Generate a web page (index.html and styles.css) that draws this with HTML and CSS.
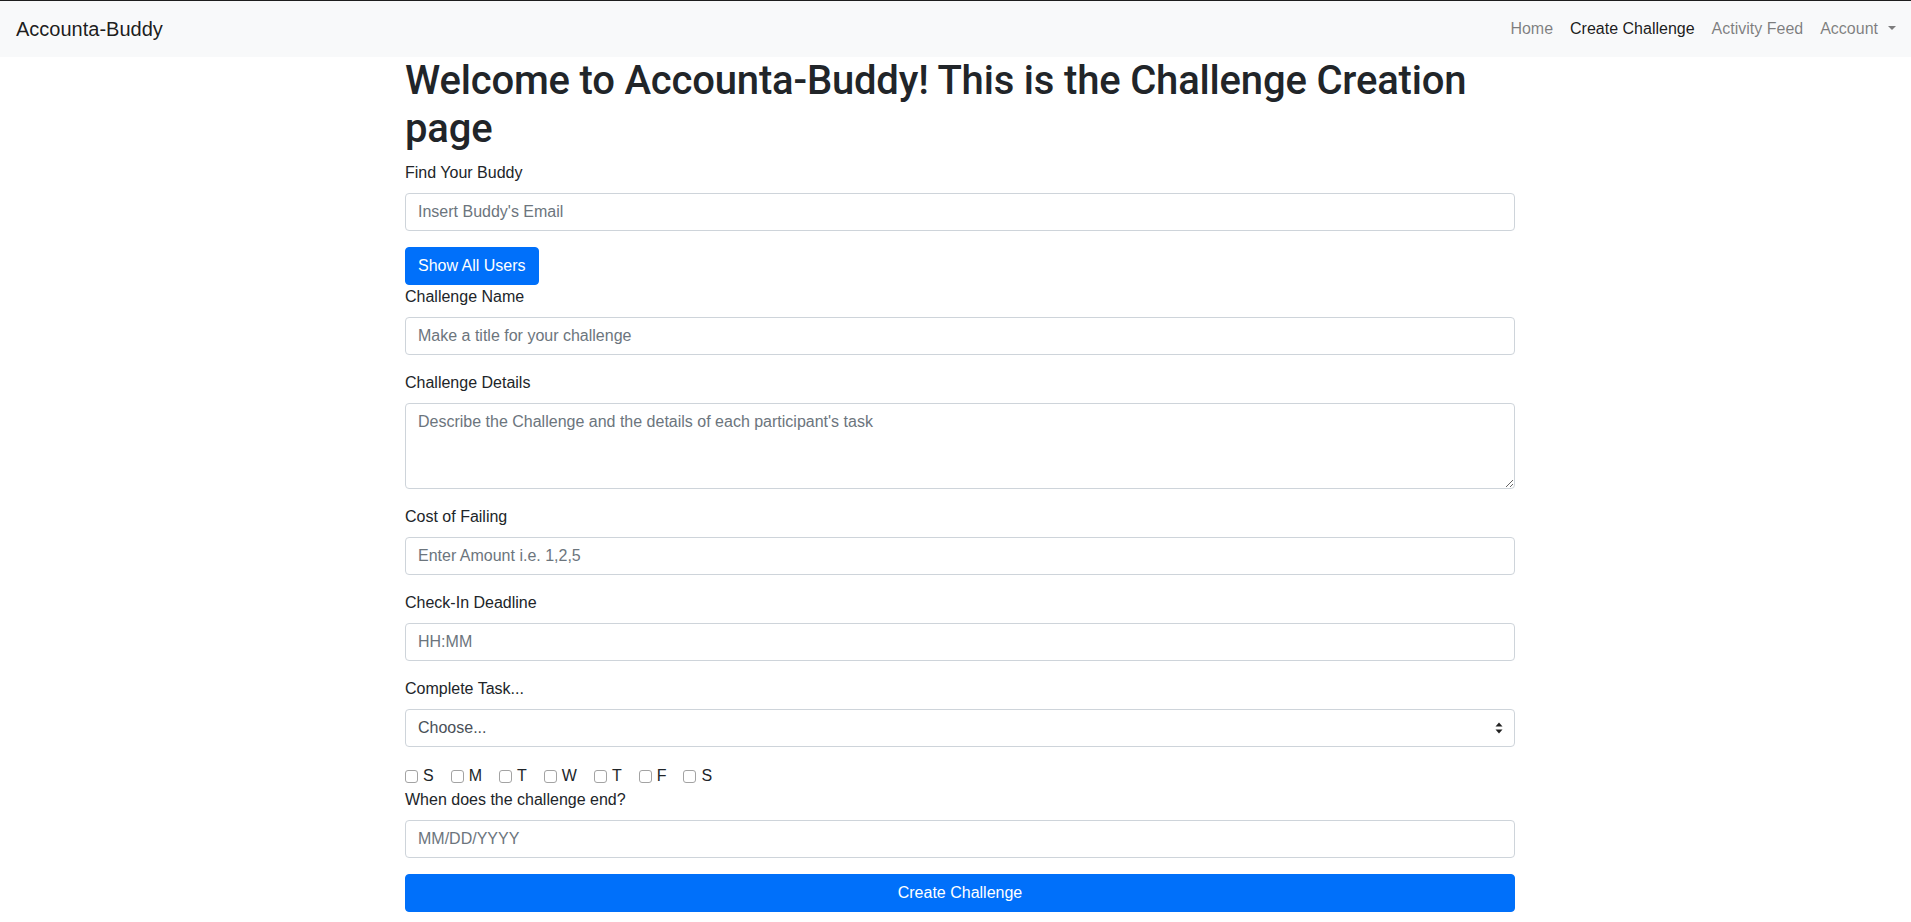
FILE: index.html
```html
<!DOCTYPE html>
<html lang="en">
<head>
<meta charset="utf-8">
<title>Accounta-Buddy</title>
<link rel="stylesheet" href="styles.css">
</head>
<body>
<div class="page">
  <div class="topline"></div>
  <nav class="navbar">
    <a class="brand" href="#">Accounta-Buddy</a>
    <ul class="nav">
      <li><a class="nav-link" href="#">Home</a></li>
      <li><a class="nav-link active" href="#">Create Challenge</a></li>
      <li><a class="nav-link" href="#">Activity Feed</a></li>
      <li><a class="nav-link dropdown-toggle" href="#">Account</a></li>
    </ul>
  </nav>
  <main class="container">
    <h1 class="title">Welcome to Accounta-Buddy! This is the Challenge Creation page</h1>
    <form class="form">
      <div class="group">
        <label class="label" for="buddy">Find Your Buddy</label>
        <input class="control" id="buddy" type="email" placeholder="Insert Buddy's Email">
      </div>
      <button type="button" class="btn">Show All Users</button>
      <div class="group">
        <label class="label" for="name">Challenge Name</label>
        <input class="control" id="name" type="text" placeholder="Make a title for your challenge">
      </div>
      <div class="group">
        <label class="label" for="details">Challenge Details</label>
        <textarea class="control area" id="details" rows="3" placeholder="Describe the Challenge and the details of each participant's task"></textarea>
      </div>
      <div class="group">
        <label class="label" for="cost">Cost of Failing</label>
        <input class="control" id="cost" type="text" placeholder="Enter Amount i.e. 1,2,5">
      </div>
      <div class="group">
        <label class="label" for="deadline">Check-In Deadline</label>
        <input class="control" id="deadline" type="text" placeholder="HH:MM">
      </div>
      <div class="group">
        <label class="label" for="task">Complete Task...</label>
        <div class="select-wrap">
          <select class="control select" id="task">
            <option>Choose...</option>
            <option>Daily</option>
            <option>Weekly</option>
          </select>
          <svg class="select-arrow" width="8" height="12" viewBox="0 0 8 12" aria-hidden="true">
            <path d="M4 0.5 L7.5 4.5 L0.5 4.5 Z" fill="#222"/>
            <path d="M4 11.5 L7.5 7.5 L0.5 7.5 Z" fill="#222"/>
          </svg>
        </div>
      </div>
      <div class="days">
        <label class="check"><input type="checkbox" class="box">S</label>
        <label class="check"><input type="checkbox" class="box">M</label>
        <label class="check"><input type="checkbox" class="box">T</label>
        <label class="check"><input type="checkbox" class="box">W</label>
        <label class="check"><input type="checkbox" class="box">T</label>
        <label class="check"><input type="checkbox" class="box">F</label>
        <label class="check"><input type="checkbox" class="box">S</label>
      </div>
      <div class="group">
        <label class="label" for="end">When does the challenge end?</label>
        <input class="control" id="end" type="text" placeholder="MM/DD/YYYY">
      </div>
      <button type="submit" class="btn btn-block">Create Challenge</button>
    </form>
  </main>
</div>
</body>
</html>
```
FILE: styles.css
```css
html, body {
  margin: 0;
  padding: 0;
  overflow: hidden;
  background: #fff;
}
body {
  font-family: "Liberation Sans", Arial, sans-serif;
  font-size: 16px;
  line-height: 1.5;
  color: #212529;
}
* { box-sizing: border-box; }

.page {
  width: 1920px;
}
.topline {
  height: 1px;
  background: #1e1e1e;
}
.navbar {
  display: flex;
  align-items: center;
  justify-content: space-between;
  padding: 8px 16px;
  background: #f8f9fa;
}
.brand {
  font-size: 20px;
  line-height: 30px;
  padding: 5px 0;
  color: rgba(0,0,0,.9);
  text-decoration: none;
}
.nav {
  display: flex;
  list-style: none;
  margin: 0;
  padding: 0;
}
.nav-link {
  display: block;
  padding: 8px 8.5px;
  color: rgba(0,0,0,.5);
  text-decoration: none;
}
.nav-link.dropdown-toggle {
  padding-right: 8px;
}
.nav-link.active {
  color: rgba(0,0,0,.9);
}
.dropdown-toggle::after {
  content: "";
  display: inline-block;
  margin-left: 10px;
  vertical-align: 4px;
  border-top: 4.5px solid;
  border-right: 4px solid transparent;
  border-left: 4px solid transparent;
  border-bottom: 0;
}

.container {
  width: 1140px;
  margin: 0 auto;
  padding: 0 15px;
}
.title {
  font-family: Roboto, "Liberation Sans", sans-serif;
  font-size: 40px;
  font-weight: 500;
  letter-spacing: -0.18px;
  line-height: 1.2;
  margin: 0 0 8px;
  color: #212529;
}
.form {
  margin: 0;
}
.group {
  margin-bottom: 16px;
}
.label {
  display: inline-block;
  margin-bottom: 8px;
  padding-top: 1px;
  margin-top: -1px;
}
.control {
  display: block;
  width: 100%;
  height: 38px;
  padding: 6px 12px;
  font-family: inherit;
  font-size: 16px;
  line-height: 1.5;
  color: #495057;
  background: #fff;
  border: 1px solid #ced4da;
  border-radius: 4px;
  margin: 0;
}
.control::placeholder {
  color: #6c757d;
  opacity: 1;
}
.area {
  height: 86px;
  resize: vertical;
}
.select-wrap {
  position: relative;
}
.select {
  appearance: none;
  -webkit-appearance: none;
  padding-right: 32px;
}
.select-arrow {
  position: absolute;
  right: 12px;
  top: 13px;
  pointer-events: none;
}
.days {
  display: flex;
  align-items: center;
  height: 25px;
}
.check {
  display: inline-flex;
  align-items: center;
  margin-right: 17px;
  line-height: 24px;
}
.box {
  appearance: none;
  -webkit-appearance: none;
  width: 13px;
  height: 13px;
  margin: 1px 5px 0 0;
  border: 1px solid #a3a3a3;
  border-radius: 3px;
  background: #fff;
}
.btn {
  display: inline-block;
  font-family: inherit;
  font-size: 16px;
  line-height: 1.5;
  padding: 6px 12px;
  color: #fff;
  background: #0070fa;
  border: 1px solid #0070fa;
  border-radius: 4px;
  cursor: pointer;
}
.btn-block {
  display: block;
  width: 100%;
}
```
